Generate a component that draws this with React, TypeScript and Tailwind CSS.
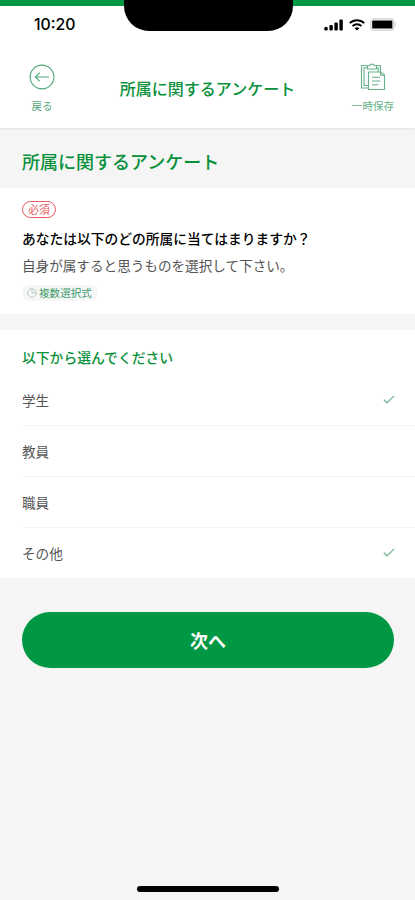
import { useState } from 'react'

const OPTIONS = ['学生', '教員', '職員', 'その他']

function StatusBar() {
  return (
    <div className="relative flex h-[46px] items-start justify-between border-t-[6px] border-[#019844] pl-[34px] pr-[18px]">
      <span className="mt-[9px] font-['Inter'] text-[15.8px] leading-5 font-medium text-black">
        10:20
      </span>

      <div className="absolute -top-[6px] left-[123.5px] h-[31px] w-[169px] rounded-b-[25px] bg-black" />

      <div className="mt-[12px] flex items-center gap-[5px]">
        <svg width="20" height="12" viewBox="0 0 20 12" fill="#000">
          <rect x="0.3" y="8" width="3.4" height="3.6" rx="1" />
          <rect x="5.4" y="6" width="3.4" height="5.6" rx="1" />
          <rect x="10.4" y="3.5" width="3.4" height="8.1" rx="1" />
          <rect x="15.4" y="0.6" width="3.4" height="11" rx="1" />
        </svg>
        <svg width="16" height="12" viewBox="0 0 16 12" fill="none" stroke="#000" strokeWidth="1.9">
          <path d="M0.8 4.2C4.8 0.2 11.2 0.2 15.2 4.2" />
          <path d="M3.5 7.1C6 4.6 10 4.6 12.5 7.1" />
          <path d="M8 11.6 5.6 9.2C7 7.9 9 7.9 10.4 9.2Z" fill="#000" stroke="none" />
        </svg>
        <svg width="27" height="13" viewBox="0 0 27 13" fill="none">
          <rect x="0.8" y="0.8" width="23" height="11.4" rx="3" stroke="#cfcfcf" strokeWidth="1.2" />
          <rect x="2.2" y="2.4" width="20.2" height="8.2" rx="1.2" fill="#000" />
          <path d="M25 4.6C26.2 5.2 26.2 7.8 25 8.4Z" fill="#bdbdbd" />
        </svg>
      </div>
    </div>
  )
}

function BackIcon() {
  return (
    <svg width="26" height="26" viewBox="0 0 26 26" fill="none" stroke="#4fa77a" strokeWidth="1.1">
      <circle cx="13" cy="13" r="11.9" />
      <path d="M20 13H6.5M10.8 8.7 6.5 13l4.3 4.3" />
    </svg>
  )
}

function ClipboardIcon() {
  return (
    <svg width="26" height="28" viewBox="0 0 26 28" fill="none" stroke="#65b188" strokeWidth="1.1">
      <path d="M7.5 2.5H1.5v22.5H8M16.5 2.5h4v6.5" />
      <path d="M7.5 4.8H4v17.7h4M16.5 4.8h1.8v4" />
      <path d="M7.5 6V2.8H9.7C9.9 0.6 13.9 0.6 14.1 2.8h2.4V6Z" />
      <path d="M8.5 9h12.3l3.7 3v14.5h-16Z" fill="#fff" />
      <path d="M20.6 9v3.2h3.9M12 14.2h8M12 18h8.5M12 21.8h6.5" />
    </svg>
  )
}

export default function App() {
  const [selected, setSelected] = useState(['学生', 'その他'])

  const toggle = (option: string) => {
    setSelected(
      selected.includes(option) ? selected.filter((o) => o !== option) : [...selected, option]
    )
  }

  return (
    <div className="flex h-[900px] w-[415px] flex-col overflow-hidden bg-[#f5f5f5] font-['Noto_Sans_CJK_JP',sans-serif] text-[13.6px] text-[#555]">
      <header className="relative h-32 shrink-0 bg-white shadow-[0_1px_2px_rgba(0,0,0,0.09)]">
        <StatusBar />
        <div className="flex h-[82px] items-start justify-between px-[18px]">
          <button type="button" className="mt-[18px] flex w-12 flex-col items-center">
            <BackIcon />
            <span className="mt-[8px] text-[10.5px] leading-4 whitespace-nowrap text-[#4fa77a]">戻る</span>
          </button>
          <h1 className="mt-[30px] text-base leading-6 font-medium whitespace-nowrap text-[#08903a]">
            所属に関するアンケート
          </h1>
          <button type="button" className="mt-[17px] flex w-12 flex-col items-center">
            <ClipboardIcon />
            <span className="mt-[7px] text-[10.6px] leading-4 whitespace-nowrap text-[#65b188]">一時保存</span>
          </button>
        </div>
      </header>

      <main className="flex flex-col">
        <h2 className="flex h-15 items-center pt-[5px] pl-[22px] text-[18px] leading-6 font-medium text-[#08903a]">
          所属に関するアンケート
        </h2>

        <section className="flex h-[126px] flex-col items-start bg-white px-[22px] pt-[13px]">
          <span className="flex h-[17px] w-[34px] items-center justify-center rounded-full border border-[#e5575c] text-[10.8px] leading-none text-[#e5575c]">
            必須
          </span>
          <p className="mt-[10px] text-[13.75px] leading-5 font-medium text-black">
            あなたは以下のどの所属に当てはまりますか？
          </p>
          <p className="mt-[7px] leading-5">自身が属すると思うものを選択して下さい。</p>
          <span className="mt-[10px] flex h-[16px] items-center gap-[2px] rounded-full bg-[#f5f7f6] pr-[6px] pl-[5px] text-[10.6px] leading-none text-[#3e9c6c]">
            <svg width="10" height="10" viewBox="0 0 10 10" fill="none" stroke="#a9c4b6" strokeWidth="0.8">
              <circle cx="5" cy="5" r="4.3" />
              <path d="M5 0.8V5h4.2" />
            </svg>
            複数選択式
          </span>
        </section>

        <section className="mt-4 h-[248px] bg-white">
          <h3 className="h-[45px] pt-[17px] pl-[22px] text-[13.8px] leading-5 font-medium text-[#08903a]">
            以下から選んでください
          </h3>
          <ul className="pl-[22px]">
            {OPTIONS.map((option) => (
              <li key={option} className="border-b border-[#f3f3f3]">
                <button
                  type="button"
                  onClick={() => toggle(option)}
                  className="flex h-[50px] w-full items-center justify-between pr-5 text-left"
                >
                  {option}
                  {selected.includes(option) && (
                    <svg width="12" height="10" viewBox="0 0 12 10" fill="none" stroke="#76b595" strokeWidth="1.2">
                      <path d="M0.8 4.8 4 7.8 11.2 0.9" />
                    </svg>
                  )}
                </button>
              </li>
            ))}
          </ul>
        </section>

        <button
          type="button"
          className="mx-[22px] mt-[34px] h-14 w-[372px] rounded-full bg-[#019844] text-[18px] font-bold text-white"
        >
          次へ
        </button>
      </main>

      <div className="mx-auto mt-auto mb-2 h-[6px] w-[142px] shrink-0 rounded-full bg-black" />
    </div>
  )
}
